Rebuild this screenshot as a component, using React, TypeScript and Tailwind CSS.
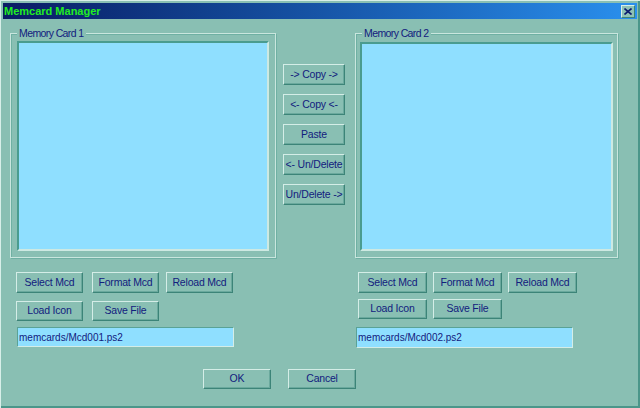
import React from "react";

const font = { fontFamily: '"Liberation Sans", Arial, sans-serif' };

function Btn({ label, className = "" }: { label: string; className?: string }) {
  return (
    <div
      className={
        "flex items-center justify-center border border-t-[#d4ede7] border-l-[#d4ede7] border-r-[#3c8478] border-b-[#3c8478] shadow-[inset_-1px_-1px_0_#6aa99d] bg-[#89bfb3] text-[10.5px] tracking-[-0.2px] text-[#12207e] whitespace-nowrap " +
        className
      }
    >
      {label}
    </div>
  );
}

function ListBox({ className = "" }: { className?: string }) {
  return (
    <div
      className={
        "bg-[#8fdfff] border-2 border-t-[#4a9c8f] border-l-[#4a9c8f] border-r-[#cde9e2] border-b-[#cde9e2] " +
        className
      }
    />
  );
}

function Group({ title, className = "", children }: { title: string; className?: string; children: React.ReactNode }) {
  return (
    <div className={"relative border border-[#c9e6de] shadow-[inset_1px_1px_0_#6fb0a3,1px_1px_0_#6fb0a3] " + className}>
      <div className="absolute left-[6px] top-[-7px] bg-[#89bfb3] px-[2px] text-[10.5px] leading-[12px] tracking-[-0.6px] text-[#12207e]">
        {title}
      </div>
      {children}
    </div>
  );
}

function TextField({ value, className = "" }: { value: string; className?: string }) {
  return (
    <div
      className={
        "flex items-center bg-[#8fdfff] border border-t-[#5aa296] border-l-[#5aa296] border-r-[#d4ede7] border-b-[#d4ede7] pl-[1px] text-[10px] text-[#12207e] " +
        className
      }
    >
      {value}
    </div>
  );
}

export default function App() {
  return (
    <div
      style={font}
      className="w-[640px] h-[408px] bg-[#89bfb3] flex flex-col shadow-[inset_1px_1px_0_#d8efe9,inset_-2px_-2px_0_#4b968a] overflow-hidden"
    >
      {/* Title bar */}
      <div className="mx-[3px] mt-[3px] h-[16px] flex items-center justify-between bg-gradient-to-r from-[#0a1c64] to-[#2a90ee]">
        <span className="pl-[1px] text-[11px] font-bold text-[#22ee22] leading-none">Memcard Manager</span>
        <div className="mr-[2px] w-[14px] h-[13px] flex items-center justify-center bg-[#8fc2b6] border border-t-[#d8efe9] border-l-[#d8efe9] border-r-[#3c8478] border-b-[#3c8478]">
          <svg width="8" height="7" viewBox="0 0 8 7">
            <path d="M0.5 0.5 L7.5 6.5 M7.5 0.5 L0.5 6.5" stroke="#0d1a6e" strokeWidth="1.6" />
          </svg>
        </div>
      </div>

      {/* Main row */}
      <div className="flex mt-[14px] pl-[10px]">
        <Group title="Memory Card 1" className="w-[266px] h-[225px] pt-[7px] pl-[6px] pr-[6px] pb-[6px]">
          <ListBox className="w-[252px] h-[210px]" />
        </Group>

        <div className="ml-[7px] w-[62px] flex flex-col pt-[31px] gap-[9px]">
          <Btn label="-> Copy ->" className="h-[21px]" />
          <Btn label="<- Copy <-" className="h-[21px]" />
          <Btn label="Paste" className="h-[21px]" />
          <Btn label="<- Un/Delete" className="h-[21px]" />
          <Btn label="Un/Delete ->" className="h-[21px]" />
        </div>

        <Group title="Memory Card 2" className="ml-[10px] w-[263px] h-[225px] pt-[8px] pl-[4px] pr-[4px] pb-[6px]">
          <ListBox className="w-[253px] h-[209px]" />
        </Group>
      </div>

      {/* Bottom controls */}
      <div className="flex mt-[14px]">
        <div className="ml-[16px] w-[340px] flex flex-col">
          <div className="flex">
            <Btn label="Select Mcd" className="w-[67px] h-[21px]" />
            <Btn label="Format Mcd" className="ml-[9px] w-[67px] h-[21px]" />
            <Btn label="Reload Mcd" className="ml-[7px] w-[67px] h-[21px]" />
          </div>
          <div className="flex mt-[8px]">
            <Btn label="Load Icon" className="w-[67px] h-[20px]" />
            <Btn label="Save File" className="ml-[9px] w-[67px] h-[20px]" />
          </div>
          <TextField value="memcards/Mcd001.ps2" className="mt-[6px] ml-[1px] w-[217px] h-[20px]" />
        </div>
        <div className="flex flex-col">
          <div className="flex">
            <Btn label="Select Mcd" className="ml-[2px] w-[69px] h-[21px]" />
            <Btn label="Format Mcd" className="ml-[6px] w-[69px] h-[21px]" />
            <Btn label="Reload Mcd" className="ml-[6px] w-[69px] h-[21px]" />
          </div>
          <div className="flex mt-[6px]">
            <Btn label="Load Icon" className="ml-[2px] w-[69px] h-[20px]" />
            <Btn label="Save File" className="ml-[6px] w-[69px] h-[20px]" />
          </div>
          <TextField value="memcards/Mcd002.ps2" className="mt-[8px] w-[217px] h-[21px]" />
        </div>
      </div>

      {/* OK / Cancel */}
      <div className="flex mt-[21px] pl-[203px]">
        <Btn label="OK" className="w-[68px] h-[20px]" />
        <Btn label="Cancel" className="ml-[17px] w-[68px] h-[20px]" />
      </div>
    </div>
  );
}
